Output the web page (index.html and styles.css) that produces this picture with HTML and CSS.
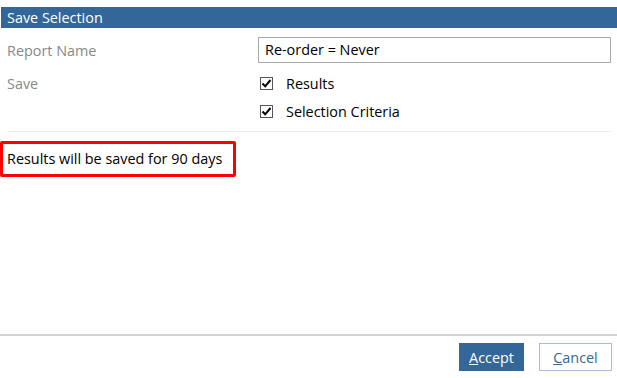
FILE: index.html
```html
<!DOCTYPE html>
<html>
<head>
<meta charset="utf-8">
<link rel="stylesheet" href="styles.css">
</head>
<body>
<div class="dialog">
  <div class="titlebar">Save Selection</div>
  <div class="form">
    <div class="row row-name">
      <div class="label">Report Name</div>
      <div class="field"><div class="input">Re-order = Never</div></div>
    </div>
    <div class="row row-check">
      <div class="label">Save</div>
      <div class="field check">
        <span class="box"><svg width="11" height="11" viewBox="0 0 11 11"><path d="M1.5 5.5 L4.2 8.3 L9.5 2" fill="none" stroke="#000" stroke-width="2"/></svg></span>
        <span class="ctext">Results</span>
      </div>
    </div>
    <div class="row row-check">
      <div class="label"></div>
      <div class="field check">
        <span class="box"><svg width="11" height="11" viewBox="0 0 11 11"><path d="M1.5 5.5 L4.2 8.3 L9.5 2" fill="none" stroke="#000" stroke-width="2"/></svg></span>
        <span class="ctext">Selection Criteria</span>
      </div>
    </div>
    <div class="sep"></div>
  </div>
  <div class="note">Results will be saved for 90 days</div>
  <div class="spacer"></div>
  <div class="footer">
    <button class="btn primary"><u>A</u>ccept</button>
    <button class="btn secondary"><u>C</u>ancel</button>
  </div>
</div>
</body>
</html>
```

FILE: styles.css
```css
html, body {
  margin: 0;
  padding: 0;
  background: #fff;
}
*, *::before, *::after {
  box-sizing: border-box;
}
body {
  font-family: "Open Sans", "Noto Sans", sans-serif;
  font-size: 14.4px;
  color: #000;
}
.dialog {
  height: 378px;
  display: flex;
  flex-direction: column;
}
.titlebar {
  margin-top: 7px;
  margin-left: 1px;
  height: 21px;
  line-height: 21px;
  background: #336699;
  color: #fff;
  padding-left: 6px;
  font-size: 14.4px;
}
.form {
  padding: 9px 6px 0 7px;
}
.row {
  display: grid;
  grid-template-columns: 251px 1fr;
  align-items: center;
}
.label {
  color: #888;
}
.row-name {
  height: 26px;
}
.input {
  height: 26px;
  border: 1px solid #a9a9a9;
  line-height: 24px;
  padding-left: 6px;
}
.row-check {
  height: 28px;
}
.row-name + .row-check {
  margin-top: 6px;
}
.check {
  display: flex;
  align-items: center;
  padding-left: 2px;
}
.box {
  width: 13px;
  height: 13px;
  border: 1px solid #555;
  display: inline-flex;
  margin-right: 13px;
}
.sep {
  margin-top: 6px;
  height: 1px;
  background: #eee;
}
.note {
  margin-top: 9px;
  width: 236px;
  height: 36px;
  line-height: 30px;
  border: 3px solid #f00;
  border-radius: 2px;
  padding-left: 4px;
}
.spacer {
  flex: 1;
}
.footer {
  border-top: 2px solid #d4d4d4;
  height: 44px;
  display: flex;
  justify-content: flex-end;
  align-items: flex-start;
  padding: 7px 5px 0 0;
  gap: 15px;
}
.btn {
  font-family: inherit;
  font-size: 14.4px;
  height: 28px;
  padding: 0;
  cursor: pointer;
}
.btn u {
  text-decoration-thickness: 1px;
}
.primary {
  width: 65px;
  background: #336699;
  color: #fff;
  border: none;
}
.secondary {
  width: 73px;
  background: #fff;
  color: #336699;
  border: 1px solid #9fc0e0;
}
```
